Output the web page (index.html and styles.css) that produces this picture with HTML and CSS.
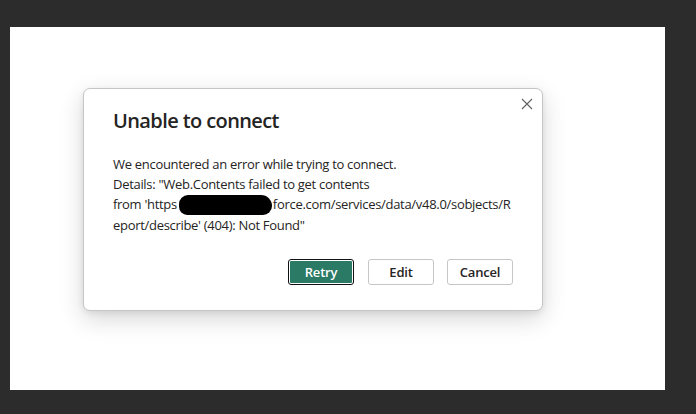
FILE: index.html
```html
<!DOCTYPE html>
<html lang="en">
<head>
<meta charset="utf-8">
<title>Unable to connect</title>
<link rel="stylesheet" href="styles.css">
</head>
<body>
<div class="stage">
  <div class="dialog" role="dialog" aria-labelledby="dlg-title">
    <button class="close" aria-label="Close">
      <svg width="12" height="12" viewBox="0 0 12 12"><path d="M1 1L11 11M11 1L1 11" stroke="#616161" stroke-width="1.1" fill="none"/></svg>
    </button>
    <h1 id="dlg-title" class="title">Unable to connect</h1>
    <div class="message">
      <p class="line">We encountered an error while trying to connect.</p>
      <p class="line">Details: "Web.Contents failed to get contents</p>
      <p class="line">from 'https<span class="redact"></span>force.com/services/data/v48.0/sobjects/R</p>
      <p class="line">eport/describe' (404): Not Found"</p>
    </div>
    <div class="actions">
      <button class="btn primary">Retry</button>
      <button class="btn">Edit</button>
      <button class="btn">Cancel</button>
    </div>
  </div>
</div>
</body>
</html>
```

FILE: styles.css
```css
html, body {
  margin: 0;
  padding: 0;
  background: #2c2c2c;
  font-family: "Open Sans", "Noto Sans", "Liberation Sans", sans-serif;
  color: #252423;
}
.stage {
  background: #ffffff;
  margin: 27px 31px 0 10px;
  height: 363px;
  padding: 61px 0 0 73px;
  box-sizing: border-box;
}
.dialog {
  position: relative;
  width: 460px;
  height: 223px;
  box-sizing: border-box;
  background: #fff;
  border: 1px solid #c6c6c6;
  border-radius: 7px;
  box-shadow: 0 8px 24px rgba(0,0,0,0.16), 0 2px 6px rgba(0,0,0,0.08);
  padding: 18px 29px 0 29px;
}
.close {
  position: absolute;
  top: 7px;
  right: 7px;
  width: 16px;
  height: 16px;
  padding: 0;
  border: 0;
  background: transparent;
  display: flex;
  align-items: center;
  justify-content: center;
}
.title {
  margin: 0;
  font-size: 20px;
  line-height: 28px;
  font-weight: 600;
  letter-spacing: -0.6px;
  color: #252423;
}
.message {
  margin-top: 19px;
  font-size: 13px;
  line-height: 20px;
  letter-spacing: -0.3px;
}
.line {
  margin: 0;
  white-space: nowrap;
}
.redact {
  display: inline-block;
  width: 93px;
  height: 20px;
  background: #000;
  border-radius: 10px 12px 10px 9px;
  vertical-align: -6px;
  margin-left: 2px;
  margin-right: 1px;
}
.actions {
  display: flex;
  justify-content: flex-end;
  gap: 13px;
  margin-top: 24px;
  padding-right: 0;
}
.btn {
  width: 66px;
  height: 26px;
  box-sizing: border-box;
  border: 1px solid #c8c6c4;
  border-radius: 3px;
  background: #fff;
  font-family: inherit;
  font-size: 13px;
  font-weight: 600;
  letter-spacing: -0.2px;
  color: #252423;
  padding: 0;
}
.btn.primary {
  width: 64px;
  margin-top: 1px;
  height: 24px;
  margin-right: 2px;
  background: #2a7a66;
  color: #fff;
  border: 1px solid #fff;
  outline: 1px solid #111;
  border-radius: 2px;
}
```
